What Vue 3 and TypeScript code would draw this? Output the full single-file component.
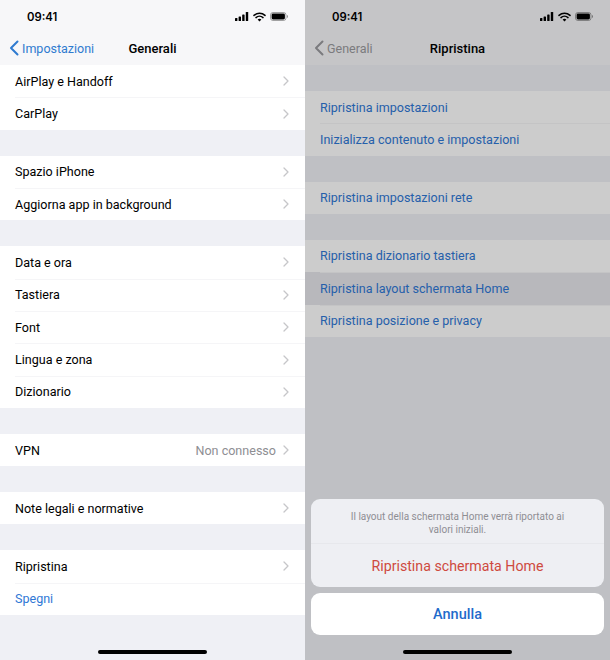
<template>
  <div class="phones">
    <section v-for="screen in screens" :key="screen.title" class="screen">
      <header class="top">
        <div class="status">
          <span class="time">09:41</span>
          <span class="status-icons">
            <svg width="14" height="9" viewBox="0 0 14 9">
              <rect x="0" y="6" width="2.4" height="3" rx=".6" />
              <rect x="3.6" y="4.4" width="2.4" height="4.6" rx=".6" />
              <rect x="7.2" y="2.4" width="2.4" height="6.6" rx=".6" />
              <rect x="10.8" y="0" width="2.4" height="9" rx=".6" />
            </svg>
            <svg width="13" height="10" viewBox="0 0 13 10">
              <path d="M1 3.4a8 8 0 0 1 11 0M3 5.6a5.1 5.1 0 0 1 7 0" fill="none" stroke="#000" stroke-width="1.5" stroke-linecap="round" />
              <path d="M6.5 9.6 4.6 7.6a2.8 2.8 0 0 1 3.8 0z" />
            </svg>
            <svg width="18" height="9" viewBox="0 0 18 9">
              <rect x=".5" y=".5" width="15.5" height="8" rx="2.4" fill="none" stroke="#000" stroke-opacity=".35" />
              <rect x="1.6" y="1.6" width="13.3" height="5.8" rx="1.4" />
              <path d="M17 3v3c.6-.2 1-.8 1-1.5S17.600 3.200 17 3z" fill-opacity=".4" />
            </svg>
          </span>
        </div>
        <nav class="nav">
          <span class="back" :class="{ muted: screen.dimmed }">
            <svg width="10" height="16" viewBox="0 0 10 16">
              <path d="M8.500 1.500 2 8l6.500 6.500" fill="none" stroke="currentColor" stroke-width="2" stroke-linecap="round" stroke-linejoin="round" />
            </svg>
            {{ screen.back }}
          </span>
          <strong class="title">{{ screen.title }}</strong>
        </nav>
      </header>

      <div class="list" :class="{ 'list-inset': screen.dimmed }">
        <div v-for="(group, g) in screen.groups" :key="g" class="group">
          <div
            v-for="row in group"
            :key="row.label"
            class="row"
            :class="{ link: row.link, pressed: row.pressed }"
          >
            <span class="label">{{ row.label }}</span>
            <span v-if="row.value" class="value">{{ row.value }}</span>
            <svg v-if="!row.link" class="chevron" width="6" height="10" viewBox="0 0 6 10">
              <path d="M1 1 5 5 1 9" fill="none" stroke="#c6c6c9" stroke-width="1.300" stroke-linecap="round" stroke-linejoin="round" />
            </svg>
          </div>
        </div>
      </div>

      <div v-if="screen.dimmed" class="dim"></div>

      <div v-if="screen.dimmed" class="sheet">
        <div class="sheet-box">
          <p class="sheet-msg">Il layout della schermata Home verrà riportato ai valori iniziali.</p>
          <div class="sheet-action">Ripristina schermata Home</div>
        </div>
        <div class="sheet-cancel">Annulla</div>
      </div>

      <div class="home-bar"></div>
    </section>
  </div>
</template>

<script setup lang="ts">
interface Row {
  label: string
  value?: string
  link?: boolean
  pressed?: boolean
}
interface Screen {
  title: string
  back: string
  dimmed: boolean
  groups: Row[][]
}

const screens: Screen[] = [
  {
    title: 'Generali',
    back: 'Impostazioni',
    dimmed: false,
    groups: [
      [{ label: 'AirPlay e Handoff' }, { label: 'CarPlay' }],
      [{ label: 'Spazio iPhone' }, { label: 'Aggiorna app in background' }],
      [
        { label: 'Data e ora' },
        { label: 'Tastiera' },
        { label: 'Font' },
        { label: 'Lingua e zona' },
        { label: 'Dizionario' },
      ],
      [{ label: 'VPN', value: 'Non connesso' }],
      [{ label: 'Note legali e normative' }],
      [{ label: 'Ripristina' }, { label: 'Spegni', link: true }],
    ],
  },
  {
    title: 'Ripristina',
    back: 'Generali',
    dimmed: true,
    groups: [
      [
        { label: 'Ripristina impostazioni', link: true },
        { label: 'Inizializza contenuto e impostazioni', link: true },
      ],
      [{ label: 'Ripristina impostazioni rete', link: true }],
      [
        { label: 'Ripristina dizionario tastiera', link: true },
        { label: 'Ripristina layout schermata Home', link: true, pressed: true },
        { label: 'Ripristina posizione e privacy', link: true },
      ],
    ],
  },
]
</script>

<style>
html,
body {
  margin: 0;
  background: #eff0f5;
}
</style>

<style scoped>
.phones {
  display: flex;
  width: 610px;
  height: 660px;
  overflow: hidden;
  font-family: Roboto, "Liberation Sans", sans-serif;
  color: #000;
}
.screen {
  position: relative;
  width: 305px;
  height: 660px;
  background: #eff0f5;
  overflow: hidden;
}
.top {
  height: 65px;
  background: #f7f7f9;
}
.status {
  display: flex;
  justify-content: space-between;
  align-items: center;
  height: 33px;
  padding: 0 17px 0 27px;
}
.time {
  font-family: Inter, "Liberation Sans", sans-serif;
  font-size: 11.3px;
  font-weight: 600;
}
.status-icons {
  display: flex;
  align-items: center;
  gap: 4px;
}
.nav {
  position: relative;
  display: flex;
  justify-content: center;
  align-items: center;
  height: 30px;
}
.back {
  position: absolute;
  left: 9px;
  top: 7px;
  display: flex;
  align-items: center;
  gap: 3px;
  font-size: 12.5px;
  color: #2f7bd0;
}
.back.muted {
  color: #9a9a9e;
}
.title {
  font-size: 13px;
  font-weight: 500;
}
.list {
  display: flex;
  flex-direction: column;
  gap: 25.8px;
}
.list-inset {
  padding-top: 26px;
}
.group {
  background: #fff;
}
.row {
  position: relative;
  display: flex;
  align-items: center;
  height: 32.4px;
  padding: 0 16px 0 15px;
  font-size: 12.55px;
}
.row + .row::before {
  content: "";
  position: absolute;
  top: 0;
  left: 15px;
  right: 0;
  height: 1px;
  background: #f5f5f7;
}
.row.link {
  color: #2f78d6;
}
.row.pressed {
  background: #e7e7ec;
}
.label {
  flex: 1;
}
.value {
  margin-right: 7px;
  color: #8e8e93;
}
.dim {
  position: absolute;
  inset: 0;
  background: rgba(0, 0, 0, 0.2);
}
.sheet {
  position: absolute;
  left: 6px;
  right: 6px;
  top: 499px;
  display: flex;
  flex-direction: column;
  gap: 6px;
}
.sheet-box {
  background: #eeeff3;
  border-radius: 9px;
  overflow: hidden;
}
.sheet-msg {
  margin: 0;
  height: 45px;
  box-sizing: border-box;
  padding: 11px 30px 0;
  font-size: 10px;
  line-height: 13px;
  text-align: center;
  color: #8e8e93;
  border-bottom: 1px solid #e7e8ec;
}
.sheet-action {
  display: flex;
  justify-content: center;
  align-items: center;
  height: 43px;
  font-size: 14.2px;
  color: #cf4a3f;
}
.sheet-cancel {
  display: flex;
  justify-content: center;
  align-items: center;
  height: 42px;
  border-radius: 9px;
  background: #fff;
  font-size: 14.5px;
  font-weight: 500;
  color: #1f6bcb;
}
.home-bar {
  position: absolute;
  left: 98px;
  top: 650px;
  width: 109px;
  height: 4px;
  border-radius: 2px;
  background: #000;
}
</style>
